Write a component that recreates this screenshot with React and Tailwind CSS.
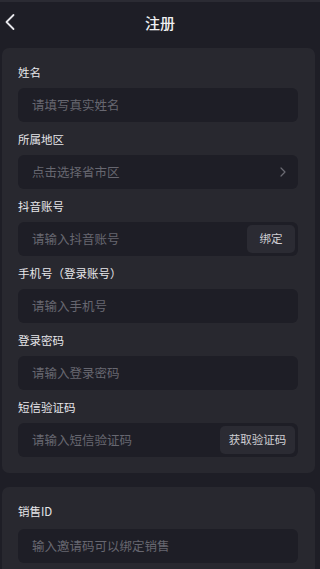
import React from "react";

const font = { fontFamily: '"Noto Sans CJK SC", "Noto Sans", sans-serif' };

function Label({ children }) {
  return <div className="h-4 flex items-center text-[11.5px] leading-4 text-[#e6e6ea] mb-2">{children}</div>;
}

function Field({ label, placeholder, right, first }) {
  return (
    <div className={first ? "" : "mt-[9px]"}>
      <Label>{label}</Label>
      <div className="h-[34px] rounded-[6px] bg-[#1e1e26] flex items-center pl-[14px] pr-[3px]">
        <span className="flex-1 text-[12.5px] text-[#676770]">{placeholder}</span>
        {right}
      </div>
    </div>
  );
}

function Btn({ children, w }) {
  return (
    <div className={`h-[28px] ${w} rounded-[5px] bg-[#2b2b33] flex items-center justify-center text-[11.5px] text-[#cfcfd4]`}>
      {children}
    </div>
  );
}

export default function App() {
  return (
    <div className="w-[320px] h-[569px] bg-[#1e1e26] overflow-hidden relative" style={font}>
      <div className="h-[2px] bg-[#2b2b33]" />
      <div className="h-[42px] relative flex items-center justify-center">
        <svg className="absolute left-[4px] top-[11px]" width="12" height="18" viewBox="0 0 12 18" fill="none">
          <path d="M9.5 2 L2.5 9 L9.5 16" stroke="#e8e8ec" strokeWidth="1.8" strokeLinecap="round" strokeLinejoin="round" />
        </svg>
        <span className="text-[15px] text-[#f0f0f2] font-medium">注册</span>
      </div>
      <div className="mt-[4px] ml-[2px] w-[313px] rounded-[7px] bg-[#28282f] pt-4 pb-4 pl-4 pr-[17px]">
        <Field first label="姓名" placeholder="请填写真实姓名" />
        <Field
          label="所属地区"
          placeholder="点击选择省市区"
          right={
            <svg className="mr-[9px]" width="6" height="10" viewBox="0 0 6 10" fill="none">
              <path d="M1 1 L5 5 L1 9" stroke="#6b6b73" strokeWidth="1.2" strokeLinecap="round" strokeLinejoin="round" />
            </svg>
          }
        />
        <Field label="抖音账号" placeholder="请输入抖音账号" right={<Btn w="w-[48px]">绑定</Btn>} />
        <Field label="手机号（登录账号）" placeholder="请输入手机号" />
        <Field label="登录密码" placeholder="请输入登录密码" />
        <Field label="短信验证码" placeholder="请输入短信验证码" right={<Btn w="w-[75px]">获取验证码</Btn>} />
      </div>
      <div className="mt-[14px] ml-[2px] w-[313px] rounded-[7px] bg-[#28282f] pt-4 pb-4 pl-4 pr-[17px]">
        <div className="h-4 flex items-center text-[11.5px] leading-4 text-[#e6e6ea] mb-[10px]">销售ID</div>
        <div className="h-[34px] rounded-[6px] bg-[#1e1e26] flex items-center pl-[14px]">
          <span className="text-[12.5px] text-[#676770]">输入邀请码可以绑定销售</span>
        </div>
      </div>
    </div>
  );
}
